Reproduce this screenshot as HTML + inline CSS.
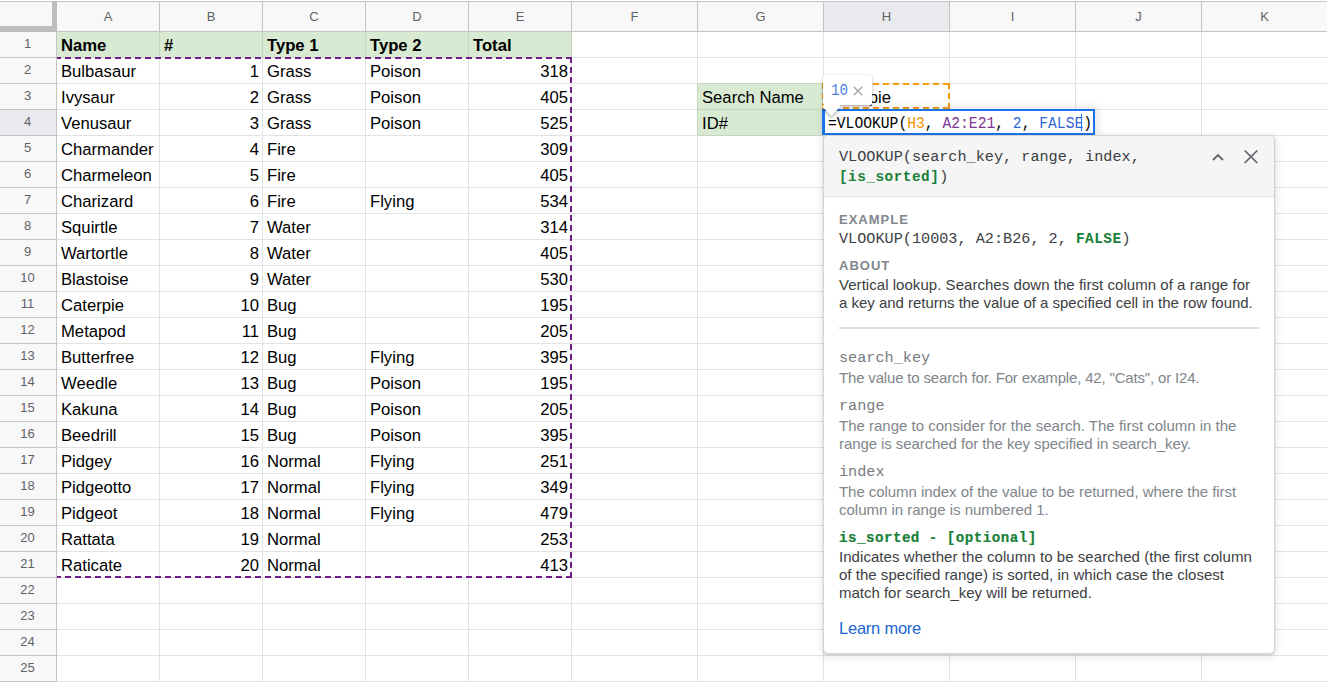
<!DOCTYPE html>
<html><head><meta charset="utf-8"><style>
html,body{margin:0;padding:0;}
body{width:1327px;height:682px;overflow:hidden;position:relative;background:#fff;font-family:'Liberation Sans', sans-serif;}
body>div,body>svg{position:absolute;}
.t{white-space:pre;}
</style></head><body>
<div style="left:0px;top:2px;width:1327px;height:29px;background:#f8f8f8"></div>
<div style="left:0px;top:32px;width:56px;height:650px;background:#f8f8f8"></div>
<div style="left:824px;top:2px;width:125px;height:29px;background:#e8eaed"></div>
<div style="left:0px;top:110px;width:56px;height:25px;background:#e8eaed"></div>
<div style="left:159px;top:32px;width:1px;height:650px;background:#e2e3e3"></div>
<div style="left:262px;top:32px;width:1px;height:650px;background:#e2e3e3"></div>
<div style="left:365px;top:32px;width:1px;height:650px;background:#e2e3e3"></div>
<div style="left:468px;top:32px;width:1px;height:650px;background:#e2e3e3"></div>
<div style="left:571px;top:32px;width:1px;height:650px;background:#e2e3e3"></div>
<div style="left:697px;top:32px;width:1px;height:650px;background:#e2e3e3"></div>
<div style="left:823px;top:32px;width:1px;height:650px;background:#e2e3e3"></div>
<div style="left:949px;top:32px;width:1px;height:650px;background:#e2e3e3"></div>
<div style="left:1075px;top:32px;width:1px;height:650px;background:#e2e3e3"></div>
<div style="left:1201px;top:32px;width:1px;height:650px;background:#e2e3e3"></div>
<div style="left:57px;top:57px;width:1270px;height:1px;background:#e2e3e3"></div>
<div style="left:57px;top:83px;width:1270px;height:1px;background:#e2e3e3"></div>
<div style="left:57px;top:109px;width:1270px;height:1px;background:#e2e3e3"></div>
<div style="left:57px;top:135px;width:1270px;height:1px;background:#e2e3e3"></div>
<div style="left:57px;top:161px;width:1270px;height:1px;background:#e2e3e3"></div>
<div style="left:57px;top:187px;width:1270px;height:1px;background:#e2e3e3"></div>
<div style="left:57px;top:213px;width:1270px;height:1px;background:#e2e3e3"></div>
<div style="left:57px;top:239px;width:1270px;height:1px;background:#e2e3e3"></div>
<div style="left:57px;top:265px;width:1270px;height:1px;background:#e2e3e3"></div>
<div style="left:57px;top:291px;width:1270px;height:1px;background:#e2e3e3"></div>
<div style="left:57px;top:317px;width:1270px;height:1px;background:#e2e3e3"></div>
<div style="left:57px;top:343px;width:1270px;height:1px;background:#e2e3e3"></div>
<div style="left:57px;top:369px;width:1270px;height:1px;background:#e2e3e3"></div>
<div style="left:57px;top:395px;width:1270px;height:1px;background:#e2e3e3"></div>
<div style="left:57px;top:421px;width:1270px;height:1px;background:#e2e3e3"></div>
<div style="left:57px;top:447px;width:1270px;height:1px;background:#e2e3e3"></div>
<div style="left:57px;top:473px;width:1270px;height:1px;background:#e2e3e3"></div>
<div style="left:57px;top:499px;width:1270px;height:1px;background:#e2e3e3"></div>
<div style="left:57px;top:525px;width:1270px;height:1px;background:#e2e3e3"></div>
<div style="left:57px;top:551px;width:1270px;height:1px;background:#e2e3e3"></div>
<div style="left:57px;top:577px;width:1270px;height:1px;background:#e2e3e3"></div>
<div style="left:57px;top:603px;width:1270px;height:1px;background:#e2e3e3"></div>
<div style="left:57px;top:629px;width:1270px;height:1px;background:#e2e3e3"></div>
<div style="left:57px;top:655px;width:1270px;height:1px;background:#e2e3e3"></div>
<div style="left:57px;top:681px;width:1270px;height:1px;background:#e2e3e3"></div>
<div style="left:57px;top:707px;width:1270px;height:1px;background:#e2e3e3"></div>
<div style="left:57px;top:32px;width:515px;height:26px;background:#d9ead3"></div>
<div style="left:697px;top:83px;width:127px;height:53px;background:#d9ead3"></div>
<div style="left:159px;top:32px;width:1px;height:25px;background:#c5d6bf"></div>
<div style="left:262px;top:32px;width:1px;height:25px;background:#c5d6bf"></div>
<div style="left:365px;top:32px;width:1px;height:25px;background:#c5d6bf"></div>
<div style="left:468px;top:32px;width:1px;height:25px;background:#c5d6bf"></div>
<div style="left:571px;top:32px;width:1px;height:25px;background:#c5d6bf"></div>
<div style="left:57px;top:57px;width:515px;height:1px;background:#c5d6bf"></div>
<div style="left:697px;top:83px;width:1px;height:53px;background:#c5d6bf"></div>
<div style="left:697px;top:83px;width:127px;height:1px;background:#c5d6bf"></div>
<div style="left:697px;top:109px;width:127px;height:1px;background:#c5d6bf"></div>
<div style="left:697px;top:135px;width:127px;height:1px;background:#c5d6bf"></div>
<div style="left:0px;top:1px;width:1327px;height:1px;background:#c4c4c4"></div>
<div style="left:0px;top:31px;width:1327px;height:1px;background:#c4c4c4"></div>
<div style="left:159px;top:2px;width:1px;height:29px;background:#c4c4c4"></div>
<div style="left:262px;top:2px;width:1px;height:29px;background:#c4c4c4"></div>
<div style="left:365px;top:2px;width:1px;height:29px;background:#c4c4c4"></div>
<div style="left:468px;top:2px;width:1px;height:29px;background:#c4c4c4"></div>
<div style="left:571px;top:2px;width:1px;height:29px;background:#c4c4c4"></div>
<div style="left:697px;top:2px;width:1px;height:29px;background:#c4c4c4"></div>
<div style="left:823px;top:2px;width:1px;height:29px;background:#c4c4c4"></div>
<div style="left:949px;top:2px;width:1px;height:29px;background:#c4c4c4"></div>
<div style="left:1075px;top:2px;width:1px;height:29px;background:#c4c4c4"></div>
<div style="left:1201px;top:2px;width:1px;height:29px;background:#c4c4c4"></div>
<div style="left:56px;top:32px;width:1px;height:650px;background:#c4c4c4"></div>
<div style="left:0px;top:57px;width:56px;height:1px;background:#c4c4c4"></div>
<div style="left:0px;top:83px;width:56px;height:1px;background:#c4c4c4"></div>
<div style="left:0px;top:109px;width:56px;height:1px;background:#c4c4c4"></div>
<div style="left:0px;top:135px;width:56px;height:1px;background:#c4c4c4"></div>
<div style="left:0px;top:161px;width:56px;height:1px;background:#c4c4c4"></div>
<div style="left:0px;top:187px;width:56px;height:1px;background:#c4c4c4"></div>
<div style="left:0px;top:213px;width:56px;height:1px;background:#c4c4c4"></div>
<div style="left:0px;top:239px;width:56px;height:1px;background:#c4c4c4"></div>
<div style="left:0px;top:265px;width:56px;height:1px;background:#c4c4c4"></div>
<div style="left:0px;top:291px;width:56px;height:1px;background:#c4c4c4"></div>
<div style="left:0px;top:317px;width:56px;height:1px;background:#c4c4c4"></div>
<div style="left:0px;top:343px;width:56px;height:1px;background:#c4c4c4"></div>
<div style="left:0px;top:369px;width:56px;height:1px;background:#c4c4c4"></div>
<div style="left:0px;top:395px;width:56px;height:1px;background:#c4c4c4"></div>
<div style="left:0px;top:421px;width:56px;height:1px;background:#c4c4c4"></div>
<div style="left:0px;top:447px;width:56px;height:1px;background:#c4c4c4"></div>
<div style="left:0px;top:473px;width:56px;height:1px;background:#c4c4c4"></div>
<div style="left:0px;top:499px;width:56px;height:1px;background:#c4c4c4"></div>
<div style="left:0px;top:525px;width:56px;height:1px;background:#c4c4c4"></div>
<div style="left:0px;top:551px;width:56px;height:1px;background:#c4c4c4"></div>
<div style="left:0px;top:577px;width:56px;height:1px;background:#c4c4c4"></div>
<div style="left:0px;top:603px;width:56px;height:1px;background:#c4c4c4"></div>
<div style="left:0px;top:629px;width:56px;height:1px;background:#c4c4c4"></div>
<div style="left:0px;top:655px;width:56px;height:1px;background:#c4c4c4"></div>
<div style="left:0px;top:681px;width:56px;height:1px;background:#c4c4c4"></div>
<div style="left:0px;top:707px;width:56px;height:1px;background:#c4c4c4"></div>
<div style="left:52px;top:1px;width:5px;height:31px;background:#bdbdbd"></div>
<div style="left:0px;top:26px;width:57px;height:6px;background:#bdbdbd"></div>
<div class="t" style="left:-92.0px;width:400px;text-align:center;top:1.50px;line-height:30px;font-size:13px;font-family:'Liberation Sans', sans-serif;color:#5f6368;font-weight:normal;">A</div>
<div class="t" style="left:11.0px;width:400px;text-align:center;top:1.50px;line-height:30px;font-size:13px;font-family:'Liberation Sans', sans-serif;color:#5f6368;font-weight:normal;">B</div>
<div class="t" style="left:114.0px;width:400px;text-align:center;top:1.50px;line-height:30px;font-size:13px;font-family:'Liberation Sans', sans-serif;color:#5f6368;font-weight:normal;">C</div>
<div class="t" style="left:217.0px;width:400px;text-align:center;top:1.50px;line-height:30px;font-size:13px;font-family:'Liberation Sans', sans-serif;color:#5f6368;font-weight:normal;">D</div>
<div class="t" style="left:320.0px;width:400px;text-align:center;top:1.50px;line-height:30px;font-size:13px;font-family:'Liberation Sans', sans-serif;color:#5f6368;font-weight:normal;">E</div>
<div class="t" style="left:434.5px;width:400px;text-align:center;top:1.50px;line-height:30px;font-size:13px;font-family:'Liberation Sans', sans-serif;color:#5f6368;font-weight:normal;">F</div>
<div class="t" style="left:560.5px;width:400px;text-align:center;top:1.50px;line-height:30px;font-size:13px;font-family:'Liberation Sans', sans-serif;color:#5f6368;font-weight:normal;">G</div>
<div class="t" style="left:686.5px;width:400px;text-align:center;top:1.50px;line-height:30px;font-size:13px;font-family:'Liberation Sans', sans-serif;color:#5f6368;font-weight:normal;">H</div>
<div class="t" style="left:812.5px;width:400px;text-align:center;top:1.50px;line-height:30px;font-size:13px;font-family:'Liberation Sans', sans-serif;color:#5f6368;font-weight:normal;">I</div>
<div class="t" style="left:938.5px;width:400px;text-align:center;top:1.50px;line-height:30px;font-size:13px;font-family:'Liberation Sans', sans-serif;color:#5f6368;font-weight:normal;">J</div>
<div class="t" style="left:1064.5px;width:400px;text-align:center;top:1.50px;line-height:30px;font-size:13px;font-family:'Liberation Sans', sans-serif;color:#5f6368;font-weight:normal;">K</div>
<div class="t" style="left:-172.5px;width:400px;text-align:center;top:28.50px;line-height:30px;font-size:13px;font-family:'Liberation Sans', sans-serif;color:#5f6368;font-weight:normal;">1</div>
<div class="t" style="left:-172.5px;width:400px;text-align:center;top:54.50px;line-height:30px;font-size:13px;font-family:'Liberation Sans', sans-serif;color:#5f6368;font-weight:normal;">2</div>
<div class="t" style="left:-172.5px;width:400px;text-align:center;top:80.50px;line-height:30px;font-size:13px;font-family:'Liberation Sans', sans-serif;color:#5f6368;font-weight:normal;">3</div>
<div class="t" style="left:-172.5px;width:400px;text-align:center;top:106.50px;line-height:30px;font-size:13px;font-family:'Liberation Sans', sans-serif;color:#5f6368;font-weight:normal;">4</div>
<div class="t" style="left:-172.5px;width:400px;text-align:center;top:132.50px;line-height:30px;font-size:13px;font-family:'Liberation Sans', sans-serif;color:#5f6368;font-weight:normal;">5</div>
<div class="t" style="left:-172.5px;width:400px;text-align:center;top:158.50px;line-height:30px;font-size:13px;font-family:'Liberation Sans', sans-serif;color:#5f6368;font-weight:normal;">6</div>
<div class="t" style="left:-172.5px;width:400px;text-align:center;top:184.50px;line-height:30px;font-size:13px;font-family:'Liberation Sans', sans-serif;color:#5f6368;font-weight:normal;">7</div>
<div class="t" style="left:-172.5px;width:400px;text-align:center;top:210.50px;line-height:30px;font-size:13px;font-family:'Liberation Sans', sans-serif;color:#5f6368;font-weight:normal;">8</div>
<div class="t" style="left:-172.5px;width:400px;text-align:center;top:236.50px;line-height:30px;font-size:13px;font-family:'Liberation Sans', sans-serif;color:#5f6368;font-weight:normal;">9</div>
<div class="t" style="left:-172.5px;width:400px;text-align:center;top:262.50px;line-height:30px;font-size:13px;font-family:'Liberation Sans', sans-serif;color:#5f6368;font-weight:normal;">10</div>
<div class="t" style="left:-172.5px;width:400px;text-align:center;top:288.50px;line-height:30px;font-size:13px;font-family:'Liberation Sans', sans-serif;color:#5f6368;font-weight:normal;">11</div>
<div class="t" style="left:-172.5px;width:400px;text-align:center;top:314.50px;line-height:30px;font-size:13px;font-family:'Liberation Sans', sans-serif;color:#5f6368;font-weight:normal;">12</div>
<div class="t" style="left:-172.5px;width:400px;text-align:center;top:340.50px;line-height:30px;font-size:13px;font-family:'Liberation Sans', sans-serif;color:#5f6368;font-weight:normal;">13</div>
<div class="t" style="left:-172.5px;width:400px;text-align:center;top:366.50px;line-height:30px;font-size:13px;font-family:'Liberation Sans', sans-serif;color:#5f6368;font-weight:normal;">14</div>
<div class="t" style="left:-172.5px;width:400px;text-align:center;top:392.50px;line-height:30px;font-size:13px;font-family:'Liberation Sans', sans-serif;color:#5f6368;font-weight:normal;">15</div>
<div class="t" style="left:-172.5px;width:400px;text-align:center;top:418.50px;line-height:30px;font-size:13px;font-family:'Liberation Sans', sans-serif;color:#5f6368;font-weight:normal;">16</div>
<div class="t" style="left:-172.5px;width:400px;text-align:center;top:444.50px;line-height:30px;font-size:13px;font-family:'Liberation Sans', sans-serif;color:#5f6368;font-weight:normal;">17</div>
<div class="t" style="left:-172.5px;width:400px;text-align:center;top:470.50px;line-height:30px;font-size:13px;font-family:'Liberation Sans', sans-serif;color:#5f6368;font-weight:normal;">18</div>
<div class="t" style="left:-172.5px;width:400px;text-align:center;top:496.50px;line-height:30px;font-size:13px;font-family:'Liberation Sans', sans-serif;color:#5f6368;font-weight:normal;">19</div>
<div class="t" style="left:-172.5px;width:400px;text-align:center;top:522.50px;line-height:30px;font-size:13px;font-family:'Liberation Sans', sans-serif;color:#5f6368;font-weight:normal;">20</div>
<div class="t" style="left:-172.5px;width:400px;text-align:center;top:548.50px;line-height:30px;font-size:13px;font-family:'Liberation Sans', sans-serif;color:#5f6368;font-weight:normal;">21</div>
<div class="t" style="left:-172.5px;width:400px;text-align:center;top:574.50px;line-height:30px;font-size:13px;font-family:'Liberation Sans', sans-serif;color:#5f6368;font-weight:normal;">22</div>
<div class="t" style="left:-172.5px;width:400px;text-align:center;top:600.50px;line-height:30px;font-size:13px;font-family:'Liberation Sans', sans-serif;color:#5f6368;font-weight:normal;">23</div>
<div class="t" style="left:-172.5px;width:400px;text-align:center;top:626.50px;line-height:30px;font-size:13px;font-family:'Liberation Sans', sans-serif;color:#5f6368;font-weight:normal;">24</div>
<div class="t" style="left:-172.5px;width:400px;text-align:center;top:652.50px;line-height:30px;font-size:13px;font-family:'Liberation Sans', sans-serif;color:#5f6368;font-weight:normal;">25</div>
<div class="t" style="left:61px;top:31.22px;line-height:30px;font-size:16.67px;font-family:'Liberation Sans', sans-serif;color:#000;font-weight:bold;">Name</div>
<div class="t" style="left:164px;top:31.22px;line-height:30px;font-size:16.67px;font-family:'Liberation Sans', sans-serif;color:#000;font-weight:bold;">#</div>
<div class="t" style="left:267px;top:31.22px;line-height:30px;font-size:16.67px;font-family:'Liberation Sans', sans-serif;color:#000;font-weight:bold;">Type 1</div>
<div class="t" style="left:370px;top:31.22px;line-height:30px;font-size:16.67px;font-family:'Liberation Sans', sans-serif;color:#000;font-weight:bold;">Type 2</div>
<div class="t" style="left:473px;top:31.22px;line-height:30px;font-size:16.67px;font-family:'Liberation Sans', sans-serif;color:#000;font-weight:bold;">Total</div>
<div class="t" style="left:61px;top:57.22px;line-height:30px;font-size:16.67px;font-family:'Liberation Sans', sans-serif;color:#000;font-weight:normal;">Bulbasaur</div>
<div class="t" style="right:1068px;top:57.22px;line-height:30px;font-size:16.67px;font-family:'Liberation Sans', sans-serif;color:#000;font-weight:normal;">1</div>
<div class="t" style="left:267px;top:57.22px;line-height:30px;font-size:16.67px;font-family:'Liberation Sans', sans-serif;color:#000;font-weight:normal;">Grass</div>
<div class="t" style="left:370px;top:57.22px;line-height:30px;font-size:16.67px;font-family:'Liberation Sans', sans-serif;color:#000;font-weight:normal;">Poison</div>
<div class="t" style="right:759px;top:57.22px;line-height:30px;font-size:16.67px;font-family:'Liberation Sans', sans-serif;color:#000;font-weight:normal;">318</div>
<div class="t" style="left:61px;top:83.22px;line-height:30px;font-size:16.67px;font-family:'Liberation Sans', sans-serif;color:#000;font-weight:normal;">Ivysaur</div>
<div class="t" style="right:1068px;top:83.22px;line-height:30px;font-size:16.67px;font-family:'Liberation Sans', sans-serif;color:#000;font-weight:normal;">2</div>
<div class="t" style="left:267px;top:83.22px;line-height:30px;font-size:16.67px;font-family:'Liberation Sans', sans-serif;color:#000;font-weight:normal;">Grass</div>
<div class="t" style="left:370px;top:83.22px;line-height:30px;font-size:16.67px;font-family:'Liberation Sans', sans-serif;color:#000;font-weight:normal;">Poison</div>
<div class="t" style="right:759px;top:83.22px;line-height:30px;font-size:16.67px;font-family:'Liberation Sans', sans-serif;color:#000;font-weight:normal;">405</div>
<div class="t" style="left:61px;top:109.22px;line-height:30px;font-size:16.67px;font-family:'Liberation Sans', sans-serif;color:#000;font-weight:normal;">Venusaur</div>
<div class="t" style="right:1068px;top:109.22px;line-height:30px;font-size:16.67px;font-family:'Liberation Sans', sans-serif;color:#000;font-weight:normal;">3</div>
<div class="t" style="left:267px;top:109.22px;line-height:30px;font-size:16.67px;font-family:'Liberation Sans', sans-serif;color:#000;font-weight:normal;">Grass</div>
<div class="t" style="left:370px;top:109.22px;line-height:30px;font-size:16.67px;font-family:'Liberation Sans', sans-serif;color:#000;font-weight:normal;">Poison</div>
<div class="t" style="right:759px;top:109.22px;line-height:30px;font-size:16.67px;font-family:'Liberation Sans', sans-serif;color:#000;font-weight:normal;">525</div>
<div class="t" style="left:61px;top:135.22px;line-height:30px;font-size:16.67px;font-family:'Liberation Sans', sans-serif;color:#000;font-weight:normal;">Charmander</div>
<div class="t" style="right:1068px;top:135.22px;line-height:30px;font-size:16.67px;font-family:'Liberation Sans', sans-serif;color:#000;font-weight:normal;">4</div>
<div class="t" style="left:267px;top:135.22px;line-height:30px;font-size:16.67px;font-family:'Liberation Sans', sans-serif;color:#000;font-weight:normal;">Fire</div>
<div class="t" style="right:759px;top:135.22px;line-height:30px;font-size:16.67px;font-family:'Liberation Sans', sans-serif;color:#000;font-weight:normal;">309</div>
<div class="t" style="left:61px;top:161.22px;line-height:30px;font-size:16.67px;font-family:'Liberation Sans', sans-serif;color:#000;font-weight:normal;">Charmeleon</div>
<div class="t" style="right:1068px;top:161.22px;line-height:30px;font-size:16.67px;font-family:'Liberation Sans', sans-serif;color:#000;font-weight:normal;">5</div>
<div class="t" style="left:267px;top:161.22px;line-height:30px;font-size:16.67px;font-family:'Liberation Sans', sans-serif;color:#000;font-weight:normal;">Fire</div>
<div class="t" style="right:759px;top:161.22px;line-height:30px;font-size:16.67px;font-family:'Liberation Sans', sans-serif;color:#000;font-weight:normal;">405</div>
<div class="t" style="left:61px;top:187.22px;line-height:30px;font-size:16.67px;font-family:'Liberation Sans', sans-serif;color:#000;font-weight:normal;">Charizard</div>
<div class="t" style="right:1068px;top:187.22px;line-height:30px;font-size:16.67px;font-family:'Liberation Sans', sans-serif;color:#000;font-weight:normal;">6</div>
<div class="t" style="left:267px;top:187.22px;line-height:30px;font-size:16.67px;font-family:'Liberation Sans', sans-serif;color:#000;font-weight:normal;">Fire</div>
<div class="t" style="left:370px;top:187.22px;line-height:30px;font-size:16.67px;font-family:'Liberation Sans', sans-serif;color:#000;font-weight:normal;">Flying</div>
<div class="t" style="right:759px;top:187.22px;line-height:30px;font-size:16.67px;font-family:'Liberation Sans', sans-serif;color:#000;font-weight:normal;">534</div>
<div class="t" style="left:61px;top:213.22px;line-height:30px;font-size:16.67px;font-family:'Liberation Sans', sans-serif;color:#000;font-weight:normal;">Squirtle</div>
<div class="t" style="right:1068px;top:213.22px;line-height:30px;font-size:16.67px;font-family:'Liberation Sans', sans-serif;color:#000;font-weight:normal;">7</div>
<div class="t" style="left:267px;top:213.22px;line-height:30px;font-size:16.67px;font-family:'Liberation Sans', sans-serif;color:#000;font-weight:normal;">Water</div>
<div class="t" style="right:759px;top:213.22px;line-height:30px;font-size:16.67px;font-family:'Liberation Sans', sans-serif;color:#000;font-weight:normal;">314</div>
<div class="t" style="left:61px;top:239.22px;line-height:30px;font-size:16.67px;font-family:'Liberation Sans', sans-serif;color:#000;font-weight:normal;">Wartortle</div>
<div class="t" style="right:1068px;top:239.22px;line-height:30px;font-size:16.67px;font-family:'Liberation Sans', sans-serif;color:#000;font-weight:normal;">8</div>
<div class="t" style="left:267px;top:239.22px;line-height:30px;font-size:16.67px;font-family:'Liberation Sans', sans-serif;color:#000;font-weight:normal;">Water</div>
<div class="t" style="right:759px;top:239.22px;line-height:30px;font-size:16.67px;font-family:'Liberation Sans', sans-serif;color:#000;font-weight:normal;">405</div>
<div class="t" style="left:61px;top:265.22px;line-height:30px;font-size:16.67px;font-family:'Liberation Sans', sans-serif;color:#000;font-weight:normal;">Blastoise</div>
<div class="t" style="right:1068px;top:265.22px;line-height:30px;font-size:16.67px;font-family:'Liberation Sans', sans-serif;color:#000;font-weight:normal;">9</div>
<div class="t" style="left:267px;top:265.22px;line-height:30px;font-size:16.67px;font-family:'Liberation Sans', sans-serif;color:#000;font-weight:normal;">Water</div>
<div class="t" style="right:759px;top:265.22px;line-height:30px;font-size:16.67px;font-family:'Liberation Sans', sans-serif;color:#000;font-weight:normal;">530</div>
<div class="t" style="left:61px;top:291.22px;line-height:30px;font-size:16.67px;font-family:'Liberation Sans', sans-serif;color:#000;font-weight:normal;">Caterpie</div>
<div class="t" style="right:1068px;top:291.22px;line-height:30px;font-size:16.67px;font-family:'Liberation Sans', sans-serif;color:#000;font-weight:normal;">10</div>
<div class="t" style="left:267px;top:291.22px;line-height:30px;font-size:16.67px;font-family:'Liberation Sans', sans-serif;color:#000;font-weight:normal;">Bug</div>
<div class="t" style="right:759px;top:291.22px;line-height:30px;font-size:16.67px;font-family:'Liberation Sans', sans-serif;color:#000;font-weight:normal;">195</div>
<div class="t" style="left:61px;top:317.22px;line-height:30px;font-size:16.67px;font-family:'Liberation Sans', sans-serif;color:#000;font-weight:normal;">Metapod</div>
<div class="t" style="right:1068px;top:317.22px;line-height:30px;font-size:16.67px;font-family:'Liberation Sans', sans-serif;color:#000;font-weight:normal;">11</div>
<div class="t" style="left:267px;top:317.22px;line-height:30px;font-size:16.67px;font-family:'Liberation Sans', sans-serif;color:#000;font-weight:normal;">Bug</div>
<div class="t" style="right:759px;top:317.22px;line-height:30px;font-size:16.67px;font-family:'Liberation Sans', sans-serif;color:#000;font-weight:normal;">205</div>
<div class="t" style="left:61px;top:343.22px;line-height:30px;font-size:16.67px;font-family:'Liberation Sans', sans-serif;color:#000;font-weight:normal;">Butterfree</div>
<div class="t" style="right:1068px;top:343.22px;line-height:30px;font-size:16.67px;font-family:'Liberation Sans', sans-serif;color:#000;font-weight:normal;">12</div>
<div class="t" style="left:267px;top:343.22px;line-height:30px;font-size:16.67px;font-family:'Liberation Sans', sans-serif;color:#000;font-weight:normal;">Bug</div>
<div class="t" style="left:370px;top:343.22px;line-height:30px;font-size:16.67px;font-family:'Liberation Sans', sans-serif;color:#000;font-weight:normal;">Flying</div>
<div class="t" style="right:759px;top:343.22px;line-height:30px;font-size:16.67px;font-family:'Liberation Sans', sans-serif;color:#000;font-weight:normal;">395</div>
<div class="t" style="left:61px;top:369.22px;line-height:30px;font-size:16.67px;font-family:'Liberation Sans', sans-serif;color:#000;font-weight:normal;">Weedle</div>
<div class="t" style="right:1068px;top:369.22px;line-height:30px;font-size:16.67px;font-family:'Liberation Sans', sans-serif;color:#000;font-weight:normal;">13</div>
<div class="t" style="left:267px;top:369.22px;line-height:30px;font-size:16.67px;font-family:'Liberation Sans', sans-serif;color:#000;font-weight:normal;">Bug</div>
<div class="t" style="left:370px;top:369.22px;line-height:30px;font-size:16.67px;font-family:'Liberation Sans', sans-serif;color:#000;font-weight:normal;">Poison</div>
<div class="t" style="right:759px;top:369.22px;line-height:30px;font-size:16.67px;font-family:'Liberation Sans', sans-serif;color:#000;font-weight:normal;">195</div>
<div class="t" style="left:61px;top:395.22px;line-height:30px;font-size:16.67px;font-family:'Liberation Sans', sans-serif;color:#000;font-weight:normal;">Kakuna</div>
<div class="t" style="right:1068px;top:395.22px;line-height:30px;font-size:16.67px;font-family:'Liberation Sans', sans-serif;color:#000;font-weight:normal;">14</div>
<div class="t" style="left:267px;top:395.22px;line-height:30px;font-size:16.67px;font-family:'Liberation Sans', sans-serif;color:#000;font-weight:normal;">Bug</div>
<div class="t" style="left:370px;top:395.22px;line-height:30px;font-size:16.67px;font-family:'Liberation Sans', sans-serif;color:#000;font-weight:normal;">Poison</div>
<div class="t" style="right:759px;top:395.22px;line-height:30px;font-size:16.67px;font-family:'Liberation Sans', sans-serif;color:#000;font-weight:normal;">205</div>
<div class="t" style="left:61px;top:421.22px;line-height:30px;font-size:16.67px;font-family:'Liberation Sans', sans-serif;color:#000;font-weight:normal;">Beedrill</div>
<div class="t" style="right:1068px;top:421.22px;line-height:30px;font-size:16.67px;font-family:'Liberation Sans', sans-serif;color:#000;font-weight:normal;">15</div>
<div class="t" style="left:267px;top:421.22px;line-height:30px;font-size:16.67px;font-family:'Liberation Sans', sans-serif;color:#000;font-weight:normal;">Bug</div>
<div class="t" style="left:370px;top:421.22px;line-height:30px;font-size:16.67px;font-family:'Liberation Sans', sans-serif;color:#000;font-weight:normal;">Poison</div>
<div class="t" style="right:759px;top:421.22px;line-height:30px;font-size:16.67px;font-family:'Liberation Sans', sans-serif;color:#000;font-weight:normal;">395</div>
<div class="t" style="left:61px;top:447.22px;line-height:30px;font-size:16.67px;font-family:'Liberation Sans', sans-serif;color:#000;font-weight:normal;">Pidgey</div>
<div class="t" style="right:1068px;top:447.22px;line-height:30px;font-size:16.67px;font-family:'Liberation Sans', sans-serif;color:#000;font-weight:normal;">16</div>
<div class="t" style="left:267px;top:447.22px;line-height:30px;font-size:16.67px;font-family:'Liberation Sans', sans-serif;color:#000;font-weight:normal;">Normal</div>
<div class="t" style="left:370px;top:447.22px;line-height:30px;font-size:16.67px;font-family:'Liberation Sans', sans-serif;color:#000;font-weight:normal;">Flying</div>
<div class="t" style="right:759px;top:447.22px;line-height:30px;font-size:16.67px;font-family:'Liberation Sans', sans-serif;color:#000;font-weight:normal;">251</div>
<div class="t" style="left:61px;top:473.22px;line-height:30px;font-size:16.67px;font-family:'Liberation Sans', sans-serif;color:#000;font-weight:normal;">Pidgeotto</div>
<div class="t" style="right:1068px;top:473.22px;line-height:30px;font-size:16.67px;font-family:'Liberation Sans', sans-serif;color:#000;font-weight:normal;">17</div>
<div class="t" style="left:267px;top:473.22px;line-height:30px;font-size:16.67px;font-family:'Liberation Sans', sans-serif;color:#000;font-weight:normal;">Normal</div>
<div class="t" style="left:370px;top:473.22px;line-height:30px;font-size:16.67px;font-family:'Liberation Sans', sans-serif;color:#000;font-weight:normal;">Flying</div>
<div class="t" style="right:759px;top:473.22px;line-height:30px;font-size:16.67px;font-family:'Liberation Sans', sans-serif;color:#000;font-weight:normal;">349</div>
<div class="t" style="left:61px;top:499.22px;line-height:30px;font-size:16.67px;font-family:'Liberation Sans', sans-serif;color:#000;font-weight:normal;">Pidgeot</div>
<div class="t" style="right:1068px;top:499.22px;line-height:30px;font-size:16.67px;font-family:'Liberation Sans', sans-serif;color:#000;font-weight:normal;">18</div>
<div class="t" style="left:267px;top:499.22px;line-height:30px;font-size:16.67px;font-family:'Liberation Sans', sans-serif;color:#000;font-weight:normal;">Normal</div>
<div class="t" style="left:370px;top:499.22px;line-height:30px;font-size:16.67px;font-family:'Liberation Sans', sans-serif;color:#000;font-weight:normal;">Flying</div>
<div class="t" style="right:759px;top:499.22px;line-height:30px;font-size:16.67px;font-family:'Liberation Sans', sans-serif;color:#000;font-weight:normal;">479</div>
<div class="t" style="left:61px;top:525.22px;line-height:30px;font-size:16.67px;font-family:'Liberation Sans', sans-serif;color:#000;font-weight:normal;">Rattata</div>
<div class="t" style="right:1068px;top:525.22px;line-height:30px;font-size:16.67px;font-family:'Liberation Sans', sans-serif;color:#000;font-weight:normal;">19</div>
<div class="t" style="left:267px;top:525.22px;line-height:30px;font-size:16.67px;font-family:'Liberation Sans', sans-serif;color:#000;font-weight:normal;">Normal</div>
<div class="t" style="right:759px;top:525.22px;line-height:30px;font-size:16.67px;font-family:'Liberation Sans', sans-serif;color:#000;font-weight:normal;">253</div>
<div class="t" style="left:61px;top:551.22px;line-height:30px;font-size:16.67px;font-family:'Liberation Sans', sans-serif;color:#000;font-weight:normal;">Raticate</div>
<div class="t" style="right:1068px;top:551.22px;line-height:30px;font-size:16.67px;font-family:'Liberation Sans', sans-serif;color:#000;font-weight:normal;">20</div>
<div class="t" style="left:267px;top:551.22px;line-height:30px;font-size:16.67px;font-family:'Liberation Sans', sans-serif;color:#000;font-weight:normal;">Normal</div>
<div class="t" style="right:759px;top:551.22px;line-height:30px;font-size:16.67px;font-family:'Liberation Sans', sans-serif;color:#000;font-weight:normal;">413</div>
<div class="t" style="left:702px;top:83.22px;line-height:30px;font-size:16.67px;font-family:'Liberation Sans', sans-serif;color:#000;font-weight:normal;">Search Name</div>
<div class="t" style="left:702px;top:109.22px;line-height:30px;font-size:16.67px;font-family:'Liberation Sans', sans-serif;color:#000;font-weight:normal;">ID#</div>
<div class="t" style="left:828px;top:83.22px;line-height:30px;font-size:16.67px;font-family:'Liberation Sans', sans-serif;color:#000;font-weight:normal;">Caterpie</div>
<div style="left:57px;top:57px;width:4px;height:2px;background:#701c8a"></div>
<div style="left:57px;top:576px;width:4px;height:2px;background:#701c8a"></div>
<div style="left:65px;top:57px;width:6px;height:2px;background:#701c8a"></div>
<div style="left:65px;top:576px;width:6px;height:2px;background:#701c8a"></div>
<div style="left:75px;top:57px;width:6px;height:2px;background:#701c8a"></div>
<div style="left:75px;top:576px;width:6px;height:2px;background:#701c8a"></div>
<div style="left:85px;top:57px;width:6px;height:2px;background:#701c8a"></div>
<div style="left:85px;top:576px;width:6px;height:2px;background:#701c8a"></div>
<div style="left:95px;top:57px;width:6px;height:2px;background:#701c8a"></div>
<div style="left:95px;top:576px;width:6px;height:2px;background:#701c8a"></div>
<div style="left:105px;top:57px;width:6px;height:2px;background:#701c8a"></div>
<div style="left:105px;top:576px;width:6px;height:2px;background:#701c8a"></div>
<div style="left:115px;top:57px;width:6px;height:2px;background:#701c8a"></div>
<div style="left:115px;top:576px;width:6px;height:2px;background:#701c8a"></div>
<div style="left:125px;top:57px;width:6px;height:2px;background:#701c8a"></div>
<div style="left:125px;top:576px;width:6px;height:2px;background:#701c8a"></div>
<div style="left:135px;top:57px;width:6px;height:2px;background:#701c8a"></div>
<div style="left:135px;top:576px;width:6px;height:2px;background:#701c8a"></div>
<div style="left:145px;top:57px;width:6px;height:2px;background:#701c8a"></div>
<div style="left:145px;top:576px;width:6px;height:2px;background:#701c8a"></div>
<div style="left:155px;top:57px;width:6px;height:2px;background:#701c8a"></div>
<div style="left:155px;top:576px;width:6px;height:2px;background:#701c8a"></div>
<div style="left:165px;top:57px;width:6px;height:2px;background:#701c8a"></div>
<div style="left:165px;top:576px;width:6px;height:2px;background:#701c8a"></div>
<div style="left:175px;top:57px;width:6px;height:2px;background:#701c8a"></div>
<div style="left:175px;top:576px;width:6px;height:2px;background:#701c8a"></div>
<div style="left:185px;top:57px;width:6px;height:2px;background:#701c8a"></div>
<div style="left:185px;top:576px;width:6px;height:2px;background:#701c8a"></div>
<div style="left:195px;top:57px;width:6px;height:2px;background:#701c8a"></div>
<div style="left:195px;top:576px;width:6px;height:2px;background:#701c8a"></div>
<div style="left:205px;top:57px;width:6px;height:2px;background:#701c8a"></div>
<div style="left:205px;top:576px;width:6px;height:2px;background:#701c8a"></div>
<div style="left:215px;top:57px;width:6px;height:2px;background:#701c8a"></div>
<div style="left:215px;top:576px;width:6px;height:2px;background:#701c8a"></div>
<div style="left:225px;top:57px;width:6px;height:2px;background:#701c8a"></div>
<div style="left:225px;top:576px;width:6px;height:2px;background:#701c8a"></div>
<div style="left:235px;top:57px;width:6px;height:2px;background:#701c8a"></div>
<div style="left:235px;top:576px;width:6px;height:2px;background:#701c8a"></div>
<div style="left:245px;top:57px;width:6px;height:2px;background:#701c8a"></div>
<div style="left:245px;top:576px;width:6px;height:2px;background:#701c8a"></div>
<div style="left:255px;top:57px;width:6px;height:2px;background:#701c8a"></div>
<div style="left:255px;top:576px;width:6px;height:2px;background:#701c8a"></div>
<div style="left:265px;top:57px;width:6px;height:2px;background:#701c8a"></div>
<div style="left:265px;top:576px;width:6px;height:2px;background:#701c8a"></div>
<div style="left:275px;top:57px;width:6px;height:2px;background:#701c8a"></div>
<div style="left:275px;top:576px;width:6px;height:2px;background:#701c8a"></div>
<div style="left:285px;top:57px;width:6px;height:2px;background:#701c8a"></div>
<div style="left:285px;top:576px;width:6px;height:2px;background:#701c8a"></div>
<div style="left:295px;top:57px;width:6px;height:2px;background:#701c8a"></div>
<div style="left:295px;top:576px;width:6px;height:2px;background:#701c8a"></div>
<div style="left:305px;top:57px;width:6px;height:2px;background:#701c8a"></div>
<div style="left:305px;top:576px;width:6px;height:2px;background:#701c8a"></div>
<div style="left:315px;top:57px;width:6px;height:2px;background:#701c8a"></div>
<div style="left:315px;top:576px;width:6px;height:2px;background:#701c8a"></div>
<div style="left:325px;top:57px;width:6px;height:2px;background:#701c8a"></div>
<div style="left:325px;top:576px;width:6px;height:2px;background:#701c8a"></div>
<div style="left:335px;top:57px;width:6px;height:2px;background:#701c8a"></div>
<div style="left:335px;top:576px;width:6px;height:2px;background:#701c8a"></div>
<div style="left:345px;top:57px;width:6px;height:2px;background:#701c8a"></div>
<div style="left:345px;top:576px;width:6px;height:2px;background:#701c8a"></div>
<div style="left:355px;top:57px;width:6px;height:2px;background:#701c8a"></div>
<div style="left:355px;top:576px;width:6px;height:2px;background:#701c8a"></div>
<div style="left:365px;top:57px;width:6px;height:2px;background:#701c8a"></div>
<div style="left:365px;top:576px;width:6px;height:2px;background:#701c8a"></div>
<div style="left:375px;top:57px;width:6px;height:2px;background:#701c8a"></div>
<div style="left:375px;top:576px;width:6px;height:2px;background:#701c8a"></div>
<div style="left:385px;top:57px;width:6px;height:2px;background:#701c8a"></div>
<div style="left:385px;top:576px;width:6px;height:2px;background:#701c8a"></div>
<div style="left:395px;top:57px;width:6px;height:2px;background:#701c8a"></div>
<div style="left:395px;top:576px;width:6px;height:2px;background:#701c8a"></div>
<div style="left:406px;top:57px;width:6px;height:2px;background:#701c8a"></div>
<div style="left:406px;top:576px;width:6px;height:2px;background:#701c8a"></div>
<div style="left:416px;top:57px;width:6px;height:2px;background:#701c8a"></div>
<div style="left:416px;top:576px;width:6px;height:2px;background:#701c8a"></div>
<div style="left:426px;top:57px;width:6px;height:2px;background:#701c8a"></div>
<div style="left:426px;top:576px;width:6px;height:2px;background:#701c8a"></div>
<div style="left:436px;top:57px;width:6px;height:2px;background:#701c8a"></div>
<div style="left:436px;top:576px;width:6px;height:2px;background:#701c8a"></div>
<div style="left:446px;top:57px;width:6px;height:2px;background:#701c8a"></div>
<div style="left:446px;top:576px;width:6px;height:2px;background:#701c8a"></div>
<div style="left:456px;top:57px;width:6px;height:2px;background:#701c8a"></div>
<div style="left:456px;top:576px;width:6px;height:2px;background:#701c8a"></div>
<div style="left:466px;top:57px;width:6px;height:2px;background:#701c8a"></div>
<div style="left:466px;top:576px;width:6px;height:2px;background:#701c8a"></div>
<div style="left:476px;top:57px;width:6px;height:2px;background:#701c8a"></div>
<div style="left:476px;top:576px;width:6px;height:2px;background:#701c8a"></div>
<div style="left:486px;top:57px;width:6px;height:2px;background:#701c8a"></div>
<div style="left:486px;top:576px;width:6px;height:2px;background:#701c8a"></div>
<div style="left:496px;top:57px;width:6px;height:2px;background:#701c8a"></div>
<div style="left:496px;top:576px;width:6px;height:2px;background:#701c8a"></div>
<div style="left:506px;top:57px;width:6px;height:2px;background:#701c8a"></div>
<div style="left:506px;top:576px;width:6px;height:2px;background:#701c8a"></div>
<div style="left:516px;top:57px;width:6px;height:2px;background:#701c8a"></div>
<div style="left:516px;top:576px;width:6px;height:2px;background:#701c8a"></div>
<div style="left:526px;top:57px;width:6px;height:2px;background:#701c8a"></div>
<div style="left:526px;top:576px;width:6px;height:2px;background:#701c8a"></div>
<div style="left:536px;top:57px;width:6px;height:2px;background:#701c8a"></div>
<div style="left:536px;top:576px;width:6px;height:2px;background:#701c8a"></div>
<div style="left:546px;top:57px;width:6px;height:2px;background:#701c8a"></div>
<div style="left:546px;top:576px;width:6px;height:2px;background:#701c8a"></div>
<div style="left:556px;top:57px;width:6px;height:2px;background:#701c8a"></div>
<div style="left:556px;top:576px;width:6px;height:2px;background:#701c8a"></div>
<div style="left:566px;top:57px;width:6px;height:2px;background:#701c8a"></div>
<div style="left:566px;top:576px;width:6px;height:2px;background:#701c8a"></div>
<div style="left:570px;top:57px;width:2px;height:6px;background:#701c8a"></div>
<div style="left:570px;top:67px;width:2px;height:6px;background:#701c8a"></div>
<div style="left:570px;top:77px;width:2px;height:6px;background:#701c8a"></div>
<div style="left:570px;top:87px;width:2px;height:6px;background:#701c8a"></div>
<div style="left:570px;top:97px;width:2px;height:6px;background:#701c8a"></div>
<div style="left:570px;top:107px;width:2px;height:6px;background:#701c8a"></div>
<div style="left:570px;top:116px;width:2px;height:6px;background:#701c8a"></div>
<div style="left:570px;top:126px;width:2px;height:6px;background:#701c8a"></div>
<div style="left:570px;top:136px;width:2px;height:6px;background:#701c8a"></div>
<div style="left:570px;top:146px;width:2px;height:6px;background:#701c8a"></div>
<div style="left:570px;top:156px;width:2px;height:6px;background:#701c8a"></div>
<div style="left:570px;top:166px;width:2px;height:6px;background:#701c8a"></div>
<div style="left:570px;top:176px;width:2px;height:6px;background:#701c8a"></div>
<div style="left:570px;top:186px;width:2px;height:6px;background:#701c8a"></div>
<div style="left:570px;top:196px;width:2px;height:6px;background:#701c8a"></div>
<div style="left:570px;top:206px;width:2px;height:6px;background:#701c8a"></div>
<div style="left:570px;top:215px;width:2px;height:6px;background:#701c8a"></div>
<div style="left:570px;top:225px;width:2px;height:6px;background:#701c8a"></div>
<div style="left:570px;top:235px;width:2px;height:6px;background:#701c8a"></div>
<div style="left:570px;top:245px;width:2px;height:6px;background:#701c8a"></div>
<div style="left:570px;top:255px;width:2px;height:6px;background:#701c8a"></div>
<div style="left:570px;top:265px;width:2px;height:6px;background:#701c8a"></div>
<div style="left:570px;top:275px;width:2px;height:6px;background:#701c8a"></div>
<div style="left:570px;top:285px;width:2px;height:6px;background:#701c8a"></div>
<div style="left:570px;top:295px;width:2px;height:6px;background:#701c8a"></div>
<div style="left:570px;top:305px;width:2px;height:6px;background:#701c8a"></div>
<div style="left:570px;top:314px;width:2px;height:6px;background:#701c8a"></div>
<div style="left:570px;top:324px;width:2px;height:6px;background:#701c8a"></div>
<div style="left:570px;top:334px;width:2px;height:6px;background:#701c8a"></div>
<div style="left:570px;top:344px;width:2px;height:6px;background:#701c8a"></div>
<div style="left:570px;top:354px;width:2px;height:6px;background:#701c8a"></div>
<div style="left:570px;top:364px;width:2px;height:6px;background:#701c8a"></div>
<div style="left:570px;top:374px;width:2px;height:6px;background:#701c8a"></div>
<div style="left:570px;top:384px;width:2px;height:6px;background:#701c8a"></div>
<div style="left:570px;top:394px;width:2px;height:6px;background:#701c8a"></div>
<div style="left:570px;top:404px;width:2px;height:6px;background:#701c8a"></div>
<div style="left:570px;top:413px;width:2px;height:6px;background:#701c8a"></div>
<div style="left:570px;top:423px;width:2px;height:6px;background:#701c8a"></div>
<div style="left:570px;top:433px;width:2px;height:6px;background:#701c8a"></div>
<div style="left:570px;top:443px;width:2px;height:6px;background:#701c8a"></div>
<div style="left:570px;top:453px;width:2px;height:6px;background:#701c8a"></div>
<div style="left:570px;top:463px;width:2px;height:6px;background:#701c8a"></div>
<div style="left:570px;top:473px;width:2px;height:6px;background:#701c8a"></div>
<div style="left:570px;top:483px;width:2px;height:6px;background:#701c8a"></div>
<div style="left:570px;top:493px;width:2px;height:6px;background:#701c8a"></div>
<div style="left:570px;top:503px;width:2px;height:6px;background:#701c8a"></div>
<div style="left:570px;top:512px;width:2px;height:6px;background:#701c8a"></div>
<div style="left:570px;top:522px;width:2px;height:6px;background:#701c8a"></div>
<div style="left:570px;top:532px;width:2px;height:6px;background:#701c8a"></div>
<div style="left:570px;top:542px;width:2px;height:6px;background:#701c8a"></div>
<div style="left:570px;top:552px;width:2px;height:6px;background:#701c8a"></div>
<div style="left:570px;top:562px;width:2px;height:6px;background:#701c8a"></div>
<div style="left:570px;top:572px;width:2px;height:6px;background:#701c8a"></div>
<div style="left:822px;top:83px;width:128px;height:2px;background:repeating-linear-gradient(90deg,#f59a10 0 6px,transparent 6px 10px);background-position:1px 0"></div>
<div style="left:822px;top:107px;width:128px;height:2px;background:repeating-linear-gradient(90deg,#f59a10 0 6px,transparent 6px 10px);background-position:1px 0"></div>
<div style="left:822px;top:83px;width:2px;height:26px;background:repeating-linear-gradient(180deg,#f59a10 0 6px,transparent 6px 10px);background-position:0 0px"></div>
<div style="left:948px;top:83px;width:2px;height:26px;background:repeating-linear-gradient(180deg,#f59a10 0 6px,transparent 6px 10px);background-position:0 0px"></div>
<div style="left:822px;top:109px;width:268px;height:22px;border:2px solid #1a73e8;border-left-width:3px;background:#fff;box-shadow:1px 0 8px 1px rgba(60,64,67,.16)"></div>
<div class="t" style="left:827.5px;top:109.47px;line-height:30px;font-size:17px;font-family:'Liberation Mono', monospace;color:#000;font-weight:normal;transform:scaleX(0.8627);transform-origin:0 0;"><span style="color:#000">=VLOOKUP(</span><span style="color:#f09300">H3</span><span style="color:#000">, </span><span style="color:#7e3794">A2:E21</span><span style="color:#000">, </span><span style="color:#3367d6">2</span><span style="color:#000">, </span><span style="color:#3367d6">FALSE</span><span style="color:#000">)</span></div>
<div style="left:1081px;top:114px;width:1px;height:17px;background:#1a73e8"></div>
<div style="left:823px;top:75px;width:49px;height:30px;background:#fff;border-radius:3px;box-shadow:0 1px 3px rgba(0,0,0,.35)"></div>
<div style="left:824.6px;top:99.6px;width:12.7px;height:12.7px;background:#fff;transform:rotate(45deg);box-shadow:2px 2px 3px rgba(0,0,0,.22)"></div>
<div style="left:823px;top:90px;width:49px;height:15px;background:#fff;border-radius:0 0 3px 3px"></div>
<div class="t" style="left:831px;top:75.60px;line-height:30px;font-size:16.5px;font-family:'Liberation Mono', monospace;color:#4a7fe0;font-weight:normal;transform:scaleX(0.86);transform-origin:0 0;">10</div>
<svg style="position:absolute;left:850px;top:83px" width="16" height="16" viewBox="0 0 16 16"><path d="M3.8 3.8 L12.2 12.2 M12.2 3.8 L3.8 12.2" fill="none" stroke="#a8acb0" stroke-width="1.6"/></svg>
<div style="left:823px;top:135px;width:450px;height:517px;border:1px solid #d4d4d4;border-radius:5px;background:#fff;box-shadow:0 1px 2px rgba(60,64,67,.2),0 2px 7px 2px rgba(60,64,67,.1);overflow:hidden"><div style="position:absolute;left:0;top:0;right:0;height:60px;background:#f5f5f5;border-bottom:1px solid #e0e0e0"></div></div>
<div class="t" style="left:839px;top:141.95px;line-height:30px;font-size:15.2px;font-family:'Liberation Mono', monospace;color:#3c4043;font-weight:normal;">VLOOKUP(search_key, range, index,</div>
<div class="t" style="left:839px;top:161.95px;line-height:30px;font-size:15.2px;font-family:'Liberation Mono', monospace;color:#3c4043;font-weight:normal;"><b style="color:#188038;font-size:14.3px;letter-spacing:0.54px">[is_sorted]</b>)</div>
<svg style="position:absolute;left:1208px;top:148px" width="20" height="20" viewBox="0 0 20 20"><path d="M5 12 L10 7 L15 12" fill="none" stroke="#5f6368" stroke-width="1.8"/></svg>
<svg style="position:absolute;left:1241px;top:147px" width="20" height="20" viewBox="0 0 20 20"><path d="M3.7 3.5 L16.3 16 M16.3 3.5 L3.7 16" fill="none" stroke="#5f6368" stroke-width="1.75"/></svg>
<div class="t" style="left:839px;top:204.50px;line-height:30px;font-size:13px;font-family:'Liberation Sans', sans-serif;color:#80868b;font-weight:bold;letter-spacing:1px">EXAMPLE</div>
<div class="t" style="left:839px;top:223.95px;line-height:30px;font-size:15.2px;font-family:'Liberation Mono', monospace;color:#3c4043;font-weight:normal;">VLOOKUP(10003, A2:B26, 2, <b style="color:#188038;font-size:14.4px;letter-spacing:0.48px">FALSE</b>)</div>
<div class="t" style="left:839px;top:250.50px;line-height:30px;font-size:13px;font-family:'Liberation Sans', sans-serif;color:#80868b;font-weight:bold;letter-spacing:1px">ABOUT</div>
<div class="t" style="left:839px;top:269.80px;line-height:30px;font-size:15px;font-family:'Liberation Sans', sans-serif;color:#3c4043;font-weight:normal;letter-spacing:0.0410px;">Vertical lookup. Searches down the first column of a range for</div>
<div class="t" style="left:839px;top:287.80px;line-height:30px;font-size:15px;font-family:'Liberation Sans', sans-serif;color:#3c4043;font-weight:normal;letter-spacing:-0.0234px;">a key and returns the value of a specified cell in the row found.</div>
<div style="left:839px;top:327px;width:420px;height:2px;background:#dadce0"></div>
<div class="t" style="left:839px;top:342.95px;line-height:30px;font-size:15.2px;font-family:'Liberation Mono', monospace;color:#777b80;font-weight:normal;">search_key</div>
<div class="t" style="left:839px;top:362.80px;line-height:30px;font-size:15px;font-family:'Liberation Sans', sans-serif;color:#80868b;font-weight:normal;letter-spacing:-0.1696px;">The value to search for. For example, 42, &quot;Cats&quot;, or I24.</div>
<div class="t" style="left:839px;top:390.95px;line-height:30px;font-size:15.2px;font-family:'Liberation Mono', monospace;color:#777b80;font-weight:normal;">range</div>
<div class="t" style="left:839px;top:410.80px;line-height:30px;font-size:15px;font-family:'Liberation Sans', sans-serif;color:#80868b;font-weight:normal;letter-spacing:0.0000px;">The range to consider for the search. The first column in the</div>
<div class="t" style="left:839px;top:428.80px;line-height:30px;font-size:15px;font-family:'Liberation Sans', sans-serif;color:#80868b;font-weight:normal;letter-spacing:-0.0830px;">range is searched for the key specified in search_key.</div>
<div class="t" style="left:839px;top:456.95px;line-height:30px;font-size:15.2px;font-family:'Liberation Mono', monospace;color:#777b80;font-weight:normal;">index</div>
<div class="t" style="left:839px;top:476.80px;line-height:30px;font-size:15px;font-family:'Liberation Sans', sans-serif;color:#80868b;font-weight:normal;letter-spacing:-0.0517px;">The column index of the value to be returned, where the first</div>
<div class="t" style="left:839px;top:494.80px;line-height:30px;font-size:15px;font-family:'Liberation Sans', sans-serif;color:#80868b;font-weight:normal;letter-spacing:-0.0138px;">column in range is numbered 1.</div>
<div class="t" style="left:839px;top:523.22px;line-height:30px;font-size:14.2px;font-family:'Liberation Mono', monospace;color:#188038;font-weight:bold;letter-spacing:0.47px;-webkit-text-stroke:0.2px">is_sorted - [optional]</div>
<div class="t" style="left:839px;top:541.80px;line-height:30px;font-size:15px;font-family:'Liberation Sans', sans-serif;color:#3c4043;font-weight:normal;letter-spacing:0.0567px;">Indicates whether the column to be searched (the first column</div>
<div class="t" style="left:839px;top:559.80px;line-height:30px;font-size:15px;font-family:'Liberation Sans', sans-serif;color:#3c4043;font-weight:normal;letter-spacing:0.0254px;">of the specified range) is sorted, in which case the closest</div>
<div class="t" style="left:839px;top:577.80px;line-height:30px;font-size:15px;font-family:'Liberation Sans', sans-serif;color:#3c4043;font-weight:normal;letter-spacing:-0.0162px;">match for search_key will be returned.</div>
<div class="t" style="left:839px;top:613.28px;line-height:30px;font-size:16.5px;font-family:'Liberation Sans', sans-serif;color:#1b66d2;font-weight:normal;letter-spacing:-0.2333px;">Learn more</div>
</body></html>
